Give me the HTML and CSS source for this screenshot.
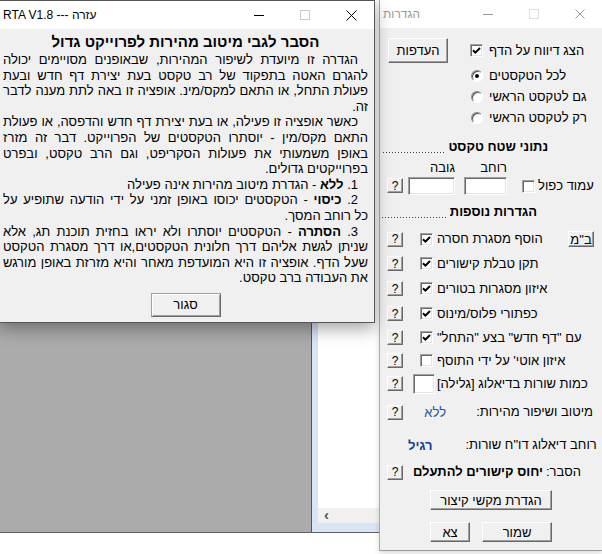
FILE: index.html
```html
<!DOCTYPE html>
<html lang="he">
<head>
    <meta charset="UTF-8">
    <title>RTA V1.8</title>
    <link rel="stylesheet" href="styles.css">
</head>
<body>
    <!-- חלון האפליקציה שמאחור -->
    <div class="app">
        <div class="canvas"></div>
        <div class="side">
            <div class="side-white"></div>
            <div class="side-bar">&lsaquo;</div>
        </div>
    </div>

    <!-- חלון הגדרות -->
    <div class="win settings">
        <div class="titlebar inactive">
            <div class="title" dir="rtl">הגדרות</div>
            <div class="tb-btn"><svg width="10" height="10"><path d="M0 5.5h10" stroke="#999"/></svg></div>
            <div class="tb-btn"><svg width="10" height="10"><rect x="0.5" y="0.5" width="9" height="9" fill="none" stroke="#ddd"/></svg></div>
            <div class="tb-btn"><svg width="10" height="10"><path d="M0.5 0.5l9 9M9.5 0.5l-9 9" stroke="#999"/></svg></div>
        </div>
        <div class="set-body">
            <div class="top-row">
                <button class="btn pref">העדפות</button>
                <div class="opts">
                    <div class="opt first">
                        <span class="chk"><svg width="9" height="9"><path d="M1 4.2l2.4 2.4L8 2" fill="none" stroke="#000" stroke-width="2"/></svg></span>
                        <span class="lbl">הצג דיווח על הדף</span>
                    </div>
                    <div class="radios">
                        <div class="opt"><span class="rad on"></span><span class="lbl">לכל הטקסטים</span></div>
                        <div class="opt"><span class="rad"></span><span class="lbl">גם לטקסט הראשי</span></div>
                        <div class="opt"><span class="rad"></span><span class="lbl">רק לטקסט הראשי</span></div>
                    </div>
                </div>
            </div>

            <div class="sec sec-1"><span class="dots"></span><span class="sec-t">נתוני שטח טקסט</span></div>

            <div class="size-row">
                <button class="btn q qb">?</button>
                <div class="dim dim-h"><span class="dim-l">גובה</span><span class="fld fld-h"></span></div>
                <div class="dim dim-w"><span class="dim-l">רוחב</span><span class="fld fld-w"></span></div>
                <div class="dbl">
                    <span class="chk"></span>
                    <span class="lbl">עמוד כפול</span>
                </div>
            </div>

            <div class="sec sec-2"><span class="dots"></span><span class="sec-t">הגדרות נוספות</span></div>

            <div class="rows">
                <div class="row first">
                    <button class="btn q">?</button>
                    <span class="chk"><svg width="9" height="9"><path d="M1 4.2l2.4 2.4L8 2" fill="none" stroke="#000" stroke-width="2"/></svg></span>
                    <span class="lbl">הוסף מסגרת חסרה</span>
                    <button class="btn bm" dir="rtl">ב"מ</button>
                </div>
                <div class="row lg">
                    <button class="btn q">?</button>
                    <span class="chk"><svg width="9" height="9"><path d="M1 4.2l2.4 2.4L8 2" fill="none" stroke="#000" stroke-width="2"/></svg></span>
                    <span class="lbl">תקן טבלת קישורים</span>
                </div>
                <div class="row lg">
                    <button class="btn q">?</button>
                    <span class="chk"><svg width="9" height="9"><path d="M1 4.2l2.4 2.4L8 2" fill="none" stroke="#000" stroke-width="2"/></svg></span>
                    <span class="lbl">איזון מסגרות בטורים</span>
                </div>
                <div class="row lg">
                    <button class="btn q">?</button>
                    <span class="chk"><svg width="9" height="9"><path d="M1 4.2l2.4 2.4L8 2" fill="none" stroke="#000" stroke-width="2"/></svg></span>
                    <span class="lbl">כפתורי פלוס/מינוס</span>
                </div>
                <div class="row">
                    <button class="btn q">?</button>
                    <span class="chk"><svg width="9" height="9"><path d="M1 4.2l2.4 2.4L8 2" fill="none" stroke="#000" stroke-width="2"/></svg></span>
                    <span class="lbl">עם "דף חדש" בצע "התחל"</span>
                </div>
                <div class="row">
                    <button class="btn q">?</button>
                    <span class="chk"></span>
                    <span class="lbl">איזון אוטי' על ידי התוסף</span>
                </div>
                <div class="row">
                    <button class="btn q">?</button>
                    <span class="fld fld-n"></span>
                    <span class="lbl">כמות שורות בדיאלוג [גלילה]</span>
                </div>
            </div>

            <div class="row speed">
                <button class="btn q">?</button>
                <span class="val">ללא</span>
                <span class="lbl">מיטוב ושיפור מהירות:</span>
            </div>

            <div class="row dlg">
                <span class="val bold">רגיל</span>
                <span class="lbl">רוחב דיאלוג דו"ח שורות:</span>
            </div>

            <div class="row expl">
                <button class="btn q">?</button>
                <span class="lbl bold">יחוס קישורים להתעלם</span>
                <span class="lbl">הסבר:</span>
            </div>

            <button class="btn keys">הגדרת מקשי קיצור</button>

            <div class="bottom">
                <button class="btn exit">צא</button>
                <button class="btn save">שמור</button>
            </div>
        </div>
    </div>

    <!-- חלון עזרה -->
    <div class="win help">
        <div class="titlebar">
            <div class="title">RTA V1.8 --- עזרה</div>
            <div class="tb-btn"><svg width="10" height="10"><path d="M0 5.5h10" stroke="#000"/></svg></div>
            <div class="tb-btn"><svg width="10" height="10"><rect x="0.5" y="0.5" width="9" height="9" fill="none" stroke="#ccc"/></svg></div>
            <div class="tb-btn"><svg width="11" height="11"><path d="M0.5 0.5l10 10M10.5 0.5l-10 10" stroke="#000"/></svg></div>
        </div>
        <div class="help-body" dir="rtl">
            <div class="help-head">הסבר לגבי מיטוב מהירות לפרוייקט גדול</div>
            <div class="help-text">
                <span class="ln ind">הגדרה זו מיועדת לשיפור המהירות, שבאופנים מסויימים יכולה</span>
                <span class="ln">להגרם האטה בתפקוד של רב טקסט  בעת יצירת דף חדש ובעת</span>
                <span class="ln">פעולת התחל, או התאם למקס/מינ. אופציה זו באה לתת מענה לדבר</span>
                <span class="ln end">זה.</span>
                <span class="ln ind">כאשר אופציה זו פעילה, או בעת יצירת דף חדש והדפסה, או פעולת</span>
                <span class="ln">התאם מקס/מין - יוסתרו הטקסטים של הפרוייקט.  דבר זה מזרז</span>
                <span class="ln">באופן משמעותי את פעולות הסקריפט, וגם הרב טקסט, ובפרט</span>
                <span class="ln end">בפרוייקטים גדולים.</span>
                <span class="ln ind end">1. <b>ללא</b> - הגדרת מיטוב מהירות אינה פעילה</span>
                <span class="ln ind">2. <b>כיסוי</b> - הטקסטים יכוסו באופן זמני על ידי הודעה שתופיע על</span>
                <span class="ln end">כל רוחב המסך.</span>
                <span class="ln ind">3. <b>הסתרה</b> - הטקסטים יוסתרו ולא יראו בחזית תוכנת תג, אלא</span>
                <span class="ln">שניתן לגשת אליהם דרך חלונית הטקסטים,או דרך מסגרת הטקסט</span>
                <span class="ln">שעל הדף. אופציה זו היא המועדפת מאחר והיא מזרזת באופן מורגש</span>
                <span class="ln end">את העבודה ברב טקסט.</span>
            </div>
            <button class="btn close">סגור</button>
        </div>
    </div>
</body>
</html>
```

FILE: styles.css
```css
html, body {
    margin: 0;
    padding: 0;
}
body {
    width: 602px;
    height: 554px;
    overflow: hidden;
    position: relative;
    background: #fff;
    font-family: "Liberation Sans", "DejaVu Sans", sans-serif;
    font-size: 13px;
    color: #000;
}

/* background app */
.app {
    position: absolute;
    left: 0;
    top: 0;
    width: 380px;
    height: 532px;
    display: flex;
    border-bottom: 1px solid #5f5f5f;
}
.canvas {
    width: 311px;
    background: #ababab;
    border-right: 1px solid #555;
}
.side {
    flex: 1;
    background: #d7e5f4;
    padding: 0 0 9px 6px;
    display: flex;
    flex-direction: column;
}
.side-white {
    flex: 1;
    background: #fff;
}
.side-bar {
    height: 15px;
    line-height: 14px;
    background: #f0f0f0;
    color: #555;
    font-size: 15px;
    font-weight: bold;
    padding-left: 6px;
}

/* windows */
.win {
    position: absolute;
    background: #f0f0f0;
    display: flex;
    flex-direction: column;
}
.help {
    left: -1px;
    top: 0;
    width: 374px;
    height: 321px;
    border: 1px solid #555;
    box-shadow: 0 6px 16px rgba(0,0,0,0.35);
    z-index: 2;
}
.settings {
    left: 379px;
    top: 0;
    width: 223px;
    height: 550px;
    border-left: 1px solid #aaa;
    border-bottom: 1px solid #999;
    box-shadow: 0 2px 6px rgba(0,0,0,0.15);
    z-index: 1;
}
.titlebar {
    height: 28px;
    background: #fff;
    display: flex;
    align-items: center;
    flex: none;
}
.title {
    flex: 1;
    padding-left: 3px;
    font-size: 12px;
    color: #000;
    text-align: left;
}
.inactive .title {
    color: #999;
}
.settings .title {
    direction: rtl;
    text-align: right;
    flex: none;
    margin-right: auto;
}
.tb-btn {
    width: 46px;
    height: 28px;
    display: flex;
    align-items: center;
    justify-content: center;
}
.tb-btn svg {
    display: block;
}

/* classic controls */
.btn {
    box-sizing: border-box;
    background: #f0f0f0;
    border: 1px solid;
    border-color: #fff #696969 #696969 #fff;
    box-shadow: inset -1px -1px #a0a0a0;
    font-family: inherit;
    font-size: 13px;
    color: #000;
    padding: 0;
    display: flex;
    align-items: center;
    justify-content: center;
    flex: none;
    direction: rtl;
    white-space: nowrap;
}
.chk {
    box-sizing: border-box;
    width: 13px;
    height: 13px;
    background: #fff;
    border: 1px solid;
    border-color: #a0a0a0 #fff #fff #a0a0a0;
    box-shadow: inset 1px 1px #696969, inset -1px -1px #e3e3e3;
    display: flex;
    align-items: center;
    justify-content: center;
    flex: none;
}
.chk svg {
    display: block;
}
.rad {
    box-sizing: border-box;
    width: 12px;
    height: 12px;
    border-radius: 50%;
    background: #fff;
    border: 1px solid;
    border-color: #8a8a8a #fff #fff #8a8a8a;
    box-shadow: inset 1px 1px #505050;
    display: flex;
    align-items: center;
    justify-content: center;
    flex: none;
    margin-left: 1px;
}
.rad.on::after {
    content: "";
    width: 4px;
    height: 4px;
    border-radius: 50%;
    background: #000;
}
.fld {
    box-sizing: border-box;
    display: block;
    background: #fff;
    border: 1px solid;
    border-color: #a0a0a0 #fff #fff #a0a0a0;
    box-shadow: inset 1px 1px #696969, inset -1px -1px #e3e3e3;
    flex: none;
}
.lbl {
    direction: rtl;
    white-space: nowrap;
    line-height: 16px;
    flex: none;
}
.bold {
    font-weight: bold;
}

/* settings body */
.set-body {
    flex: 1;
    padding: 10px 9px 0 7px;
    display: flex;
    flex-direction: column;
}
.top-row {
    display: flex;
    align-items: flex-start;
}
.pref {
    width: 60px;
    height: 25px;
    margin-left: 1px;
}
.opts {
    margin-left: 22px;
}
.opt {
    display: flex;
    align-items: center;
    height: 21px;
}
.opt.first {
    height: 25px;
}
.opt .lbl {
    margin-left: 6px;
}
.radios {
    margin-top: 2px;
}

.sec {
    display: flex;
    align-items: flex-end;
    height: 16px;
}
.sec-1 {
    width: 165px;
    margin: 11px 0 0 -4px;
}
.sec-2 {
    width: 155px;
    margin: 9px 0 0 -5px;
}
.dots {
    flex: 1;
    height: 1px;
    margin: 0 2px 2px 0;
    background-image: linear-gradient(to right, #444 1px, transparent 1px);
    background-size: 3px 1px;
}
.sec-t {
    font-weight: bold;
    line-height: 16px;
    direction: rtl;
    white-space: nowrap;
}

.size-row {
    display: flex;
    align-items: flex-end;
    margin-top: 6px;
}
.q {
    width: 16px;
    height: 15px;
    font-size: 12px;
}
.qb {
    margin-bottom: 2px;
}
.dim {
    display: flex;
    flex-direction: column;
    align-items: flex-end;
}
.dim-l {
    line-height: 14px;
    margin-bottom: 2px;
}
.dim-h {
    margin-left: 5px;
}
.dim-w {
    margin-left: 9px;
}
.fld-h {
    width: 47px;
    height: 18px;
}
.fld-w {
    width: 43px;
    height: 18px;
}
.dbl {
    display: flex;
    align-items: center;
    margin: 0 0 1px 15px;
}
.dbl .lbl {
    margin-left: 3px;
}

.rows {
    margin-top: 7px;
}
.row {
    display: flex;
    align-items: center;
    height: 23px;
}
.row.first {
    height: 24px;
}
.row.lg {
    height: 25px;
}
.row .chk {
    margin-left: 17px;
}
.row .chk + .lbl {
    margin-left: 4px;
}
.bm {
    width: 26px;
    height: 16px;
    margin-left: auto;
}
.fld-n {
    width: 22px;
    height: 20px;
    margin-left: 10px;
}
.fld-n + .lbl {
    margin-left: 2px;
}
.val {
    color: #1f55a8;
    direction: rtl;
    white-space: nowrap;
    flex: none;
}
.val.bold {
    color: #0f3f96;
}
.speed {
    margin-top: 5px;
    height: 24px;
    padding-right: 1px;
}
.speed .val {
    margin-left: auto;
}
.speed .lbl {
    margin-left: 30px;
}
.dlg {
    margin-top: 10px;
    height: 22px;
}
.dlg .val {
    margin-left: 21px;
}
.dlg .lbl {
    margin-left: 33px;
}
.expl {
    margin-top: 5px;
    height: 22px;
}
.expl .bold {
    margin-left: 10px;
}
.expl .bold + .lbl {
    margin-left: 3px;
}
.keys {
    width: 122px;
    height: 20px;
    margin: 7px 0 0 43px;
}
.bottom {
    display: flex;
    margin: 12px 0 0 43px;
}
.exit {
    width: 40px;
    height: 20px;
}
.save {
    width: 70px;
    height: 20px;
    margin-left: 12px;
}

/* help body */
.help-body {
    flex: 1;
    padding: 5px 6px 0 3px;
    display: flex;
    flex-direction: column;
}
.help-head {
    text-align: center;
    font-weight: bold;
    font-size: 15px;
    line-height: 16px;
    margin-bottom: 2px;
}
.ln {
    display: block;
    white-space: nowrap;
    line-height: 15.6px;
    text-align: justify;
    text-align-last: justify;
}
.ln.end {
    text-align-last: right;
}
.ln.ind {
    padding-right: 10px;
}
.close {
    width: 70px;
    height: 24px;
    margin: 7px auto 0;
    border-color: #a0a0a0 #696969 #696969 #a0a0a0;
    box-shadow: inset 1px 1px #fff, inset -1px -1px #a0a0a0;
}
```
